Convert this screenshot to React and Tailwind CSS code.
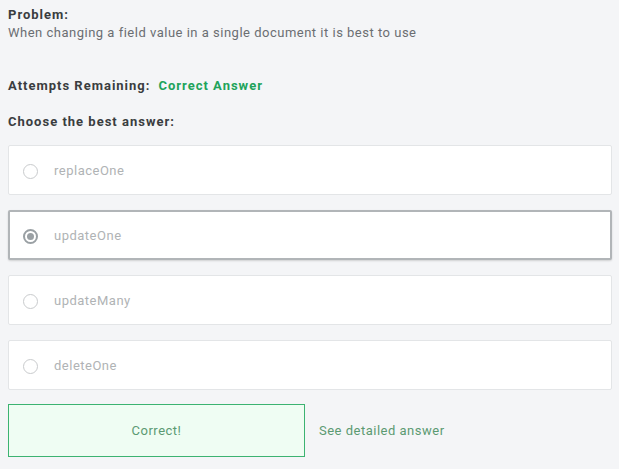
const options = ["replaceOne", "updateOne", "updateMany", "deleteOne"];

function Radio({ checked }) {
  if (checked) {
    return (
      <span className="flex h-[15px] w-[15px] items-center justify-center rounded-full border-[2px] border-[#9aa0a4]">
        <span className="h-[7px] w-[7px] rounded-full bg-[#9aa0a4]" />
      </span>
    );
  }
  return <span className="h-[15px] w-[15px] rounded-full border border-[#c9cbcd] bg-white" />;
}

export default function App() {
  const selected = 1;

  return (
    <div className="min-h-[469px] w-[619px] bg-[#f4f5f7] px-2 pt-[6px] font-['Roboto',sans-serif] text-[13px] tracking-[0.5px]">
      <div className="font-bold leading-[18px] tracking-[1px] text-[#3a3d40]">Problem:</div>
      <div className="leading-[18px] text-[#6b6e72]">
        When changing a field value in a single document it is best to use
      </div>

      <div className="mt-[35px] flex gap-2 font-bold leading-[18px] tracking-[1px]">
        <span className="text-[#3a3d40]">Attempts Remaining:</span>
        <span className="text-[#21a35a]">Correct Answer</span>
      </div>

      <div className="mt-[18px] font-bold leading-[18px] tracking-[1px] text-[#3a3d40]">Choose the best answer:</div>

      <div className="mt-[14px] flex w-[604px] flex-col gap-[15px]">
        {options.map((opt, i) =>
          i === selected ? (
            <div
              key={opt}
              className="flex h-[50px] items-center gap-[16px] rounded-[2px] border-[2px] border-[#b1b5b8] bg-white pl-[13px] pt-[2px] shadow-[0_1px_2px_rgba(0,0,0,0.15)]"
            >
              <Radio checked />
              <span className="text-[#b0b3b5]">{opt}</span>
            </div>
          ) : (
            <div
              key={opt}
              className="flex h-[50px] items-center gap-[16px] rounded-[2px] border border-[#e3e5e7] bg-white pl-[14px] pt-[2px]"
            >
              <Radio />
              <span className="text-[#b0b3b5]">{opt}</span>
            </div>
          )
        )}
      </div>

      <div className="mt-[14px] flex items-center">
        <div className="flex h-[53px] w-[297px] items-center justify-center border border-[#3cb371] bg-[#effdf3] text-[#5b9a72]">
          Correct!
        </div>
        <span className="ml-[14px] text-[#5b9a72]">See detailed answer</span>
      </div>
    </div>
  );
}
